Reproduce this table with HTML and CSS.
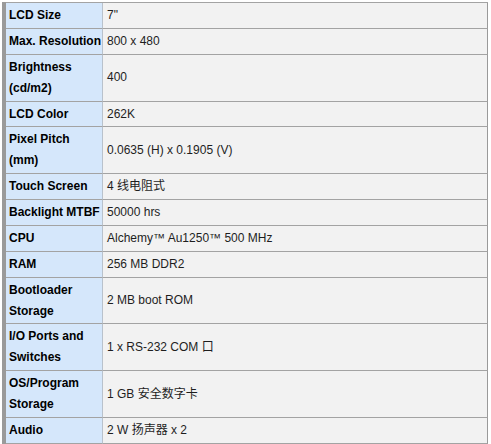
FILE: index.html
```html
<!DOCTYPE html>
<html>
<head>
<meta charset="utf-8">
<link rel="stylesheet" href="styles.css">
</head>
<body>
<div class="frame">
<table class="spec">
<colgroup><col class="c-label"><col class="c-value"></colgroup>
<tbody>
<tr><th>LCD Size</th><td>7"</td></tr>
<tr><th>Max. Resolution</th><td>800 x 480</td></tr>
<tr><th>Brightness (cd/m2)</th><td>400</td></tr>
<tr><th>LCD Color</th><td>262K</td></tr>
<tr><th>Pixel Pitch (mm)</th><td>0.0635 (H) x 0.1905 (V)</td></tr>
<tr><th>Touch Screen</th><td>4 线电阻式</td></tr>
<tr><th>Backlight MTBF</th><td>50000 hrs</td></tr>
<tr><th>CPU</th><td>Alchemy™ Au1250™ 500 MHz</td></tr>
<tr><th>RAM</th><td>256 MB DDR2</td></tr>
<tr><th>Bootloader Storage</th><td>2 MB boot ROM</td></tr>
<tr><th>I/O Ports and Switches</th><td>1 x RS-232 COM 口</td></tr>
<tr><th>OS/Program Storage</th><td>1 GB 安全数字卡</td></tr>
<tr><th>Audio</th><td>2 W 扬声器 x 2</td></tr>
</tbody>
</table>
</div>
</body>
</html>
```
FILE: styles.css
```css
html, body {
  margin: 0;
  padding: 0;
  background: #ffffff;
}
.frame {
  margin: 2px 0 0 2px;
  border-left: 4px solid #9a9a9a;
  width: 482px;
}
.spec {
  width: 482px;
  table-layout: fixed;
  border-collapse: separate;
  border-spacing: 0;
  border-top: 1px solid #a3a3a3;
  font-family: "Liberation Sans", Arial, "Noto Sans CJK SC", sans-serif;
  font-size: 12px;
  line-height: 21px;
}
.c-label { width: 97px; }
.c-value { width: 385px; }
.spec th,
.spec td {
  padding: 2px 0 1.85px 3px;
  border-bottom: 1px solid #a3a3a3;
  vertical-align: middle;
  text-align: left;
}
.spec th {
  background: #d5e7fb;
  color: #000;
  font-weight: bold;
  border-right: 1px solid #b9c2cc;
}
.spec td {
  background: #f2f2f2;
  color: #1e1e1e;
  font-weight: normal;
  padding-left: 4px;
  border-right: 1px solid #9a9a9a;
}
```
